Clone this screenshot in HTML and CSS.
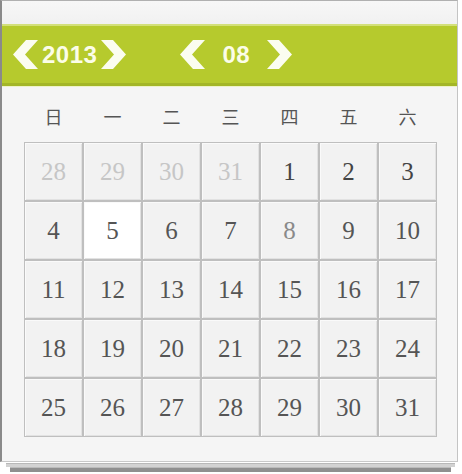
FILE: index.html
```html
<!DOCTYPE html>
<html>
<head>
<meta charset="utf-8">
<link rel="stylesheet" href="styles.css">
</head>
<body>
<div class="frame">
  <div class="card">
    <div class="top-strip"></div>
    <div class="bar">
      <div class="group year">
        <svg class="chev" viewBox="0 0 25 29"><polygon points="13,0 25,0 12,14.5 25,29 13,29 0,14.5"/></svg>
        <span class="num">2013</span>
        <svg class="chev" viewBox="0 0 25 29"><polygon points="12,0 0,0 13,14.5 0,29 12,29 25,14.5"/></svg>
      </div>
      <div class="group month">
        <svg class="chev" viewBox="0 0 25 29"><polygon points="13,0 25,0 12,14.5 25,29 13,29 0,14.5"/></svg>
        <span class="num">08</span>
        <svg class="chev" viewBox="0 0 25 29"><polygon points="12,0 0,0 13,14.5 0,29 12,29 25,14.5"/></svg>
      </div>
    </div>
    <div class="weekdays">
      <span>日</span><span>一</span><span>二</span><span>三</span><span>四</span><span>五</span><span>六</span>
    </div>
    <div class="grid">
      <div class="cell other">28</div><div class="cell other">29</div><div class="cell other">30</div><div class="cell other">31</div><div class="cell strong">1</div><div class="cell strong">2</div><div class="cell strong">3</div>
      <div class="cell">4</div><div class="cell today">5</div><div class="cell">6</div><div class="cell">7</div><div class="cell light">8</div><div class="cell">9</div><div class="cell">10</div>
      <div class="cell">11</div><div class="cell">12</div><div class="cell">13</div><div class="cell">14</div><div class="cell">15</div><div class="cell">16</div><div class="cell">17</div>
      <div class="cell">18</div><div class="cell">19</div><div class="cell">20</div><div class="cell">21</div><div class="cell">22</div><div class="cell">23</div><div class="cell">24</div>
      <div class="cell">25</div><div class="cell">26</div><div class="cell">27</div><div class="cell">28</div><div class="cell">29</div><div class="cell">30</div><div class="cell">31</div>
    </div>
  </div>
  <div class="stack1"></div>
  <div class="stack2"></div>
</div>
</body>
</html>
```
FILE: styles.css
```css
html, body {
  margin: 0;
  padding: 0;
  background: #ffffff;
}
.frame {
  width: 462px;
  height: 474px;
  display: flex;
  flex-direction: column;
}
.card {
  width: 458px;
  height: 462px;
  box-sizing: border-box;
  border-left: 2px solid #8a8a8a;
  border-top: 1px solid #b0b0b0;
  border-right: 1px solid #c4c4c4;
  border-bottom: 1px solid #c8c8c8;
  background: #f5f5f5;
  display: flex;
  flex-direction: column;
}
.top-strip {
  height: 23px;
  background: linear-gradient(#f7f7f7, #f1f1f1);
}
.bar {
  height: 62px;
  box-sizing: border-box;
  background: #b6ca2d;
  border-top: 2px solid #d3e07a;
  border-bottom: 3px solid #a3b627;
  box-shadow: 0 1px 0 #eef3c8;
  display: flex;
  align-items: center;
  padding-left: 11px;
}
.group {
  display: flex;
  align-items: center;
}
.year { gap: 4px; }
.month { gap: 17px; margin-left: 54px; }
.chev {
  width: 25px;
  height: 29px;
  fill: #fbfdf0;
}
.num {
  font-family: "Liberation Sans", Arial, sans-serif;
  font-weight: bold;
  font-size: 24px;
  color: #fbfde8;
  letter-spacing: 0.5px;
}
.weekdays {
  display: grid;
  grid-template-columns: repeat(7, 59px);
  margin-left: 22px;
  height: 56px;
  box-sizing: border-box;
  padding-top: 4px;
  align-items: center;
  font-family: "Noto Sans CJK SC", "Noto Sans CJK JP", sans-serif;
  font-size: 18px;
  color: #555;
  text-align: center;
}
.grid {
  margin-left: 22px;
  width: 413px;
  box-sizing: border-box;
  display: grid;
  grid-template-columns: repeat(7, 57px);
  grid-auto-rows: 57px;
  gap: 2px;
  padding: 1px;
  background: #bfbfbf;
}
.cell {
  background: #f2f2f2;
  box-shadow: inset 1px 1px 0 #fafafa, inset -1px -1px 0 #e2e2e2;
  display: flex;
  align-items: center;
  justify-content: center;
  font-family: "Liberation Serif", "Times New Roman", serif;
  font-size: 25px;
  color: #555;
}
.cell.other { color: #c6c6c6; }
.cell.strong { color: #444; }
.cell.light { color: #8a8a8a; }
.cell.today { background: #ffffff; }
.stack1 {
  margin: 1px 7px 0 6px;
  height: 3px;
  background: #d2d2d2;
  border-top: 1px solid #b8b8b8;
}
.stack2 {
  margin: 0 11px 0 10px;
  height: 4px;
  background: #8f8f8f;
  border-top: 1px solid #bbb;
}
```
